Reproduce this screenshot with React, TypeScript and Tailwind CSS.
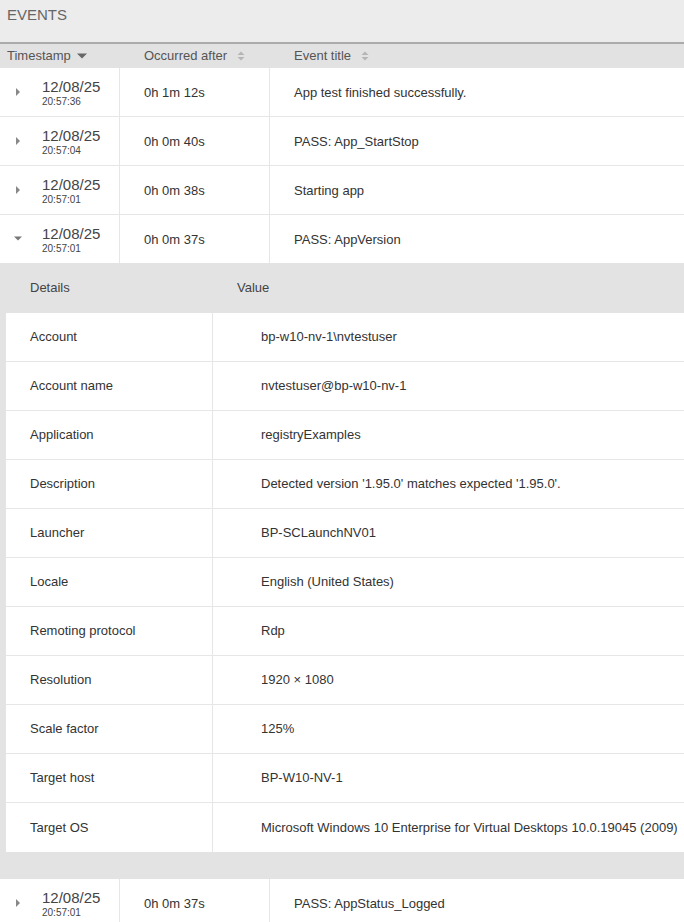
import { useState } from "react";

interface EventRow {
  date: string;
  time: string;
  after: string;
  title: string;
  details?: [string, string][];
}

const events: EventRow[] = [
  { date: "12/08/25", time: "20:57:36", after: "0h 1m 12s", title: "App test finished successfully." },
  { date: "12/08/25", time: "20:57:04", after: "0h 0m 40s", title: "PASS: App_StartStop" },
  { date: "12/08/25", time: "20:57:01", after: "0h 0m 38s", title: "Starting app" },
  {
    date: "12/08/25",
    time: "20:57:01",
    after: "0h 0m 37s",
    title: "PASS: AppVersion",
    details: [
      ["Account", "bp-w10-nv-1\\nvtestuser"],
      ["Account name", "nvtestuser@bp-w10-nv-1"],
      ["Application", "registryExamples"],
      ["Description", "Detected version '1.95.0' matches expected '1.95.0'."],
      ["Launcher", "BP-SCLaunchNV01"],
      ["Locale", "English (United States)"],
      ["Remoting protocol", "Rdp"],
      ["Resolution", "1920 × 1080"],
      ["Scale factor", "125%"],
      ["Target host", "BP-W10-NV-1"],
      ["Target OS", "Microsoft Windows 10 Enterprise for Virtual Desktops 10.0.19045 (2009)"],
    ],
  },
  { date: "12/08/25", time: "20:57:01", after: "0h 0m 37s", title: "PASS: AppStatus_Logged" },
];

const SortBoth = () => (
  <svg width="10" height="12" viewBox="0 0 10 12" className="ml-[9px] text-[#b5b5b5]">
    <path d="M1.5 5 L5 1.5 L8.5 5 Z" fill="currentColor" />
    <path d="M1.5 7 L5 10.5 L8.5 7 Z" fill="currentColor" />
  </svg>
);

const SortDown = () => (
  <svg width="12" height="8" viewBox="0 0 12 8" className="ml-[5px] text-[#666]">
    <path d="M1 1.5 L11 1.5 L6 6.5 Z" fill="currentColor" />
  </svg>
);

const Caret = ({ open }: { open: boolean }) =>
  open ? (
    <svg width="10" height="6" viewBox="0 0 10 6" className="text-[#777]">
      <path d="M1 0.5 L9 0.5 L5 4.5 Z" fill="currentColor" />
    </svg>
  ) : (
    <svg width="6" height="10" viewBox="0 0 6 10" className="text-[#888]">
      <path d="M1 1 L5 5 L1 9 Z" fill="currentColor" />
    </svg>
  );

const App = () => {
  const [openIndex, setOpenIndex] = useState<number | null>(3);

  return (
    <div className="w-[684px] h-[922px] overflow-hidden bg-white text-[13px] text-[#333] font-['Liberation_Sans',Arial,sans-serif]">
      <div className="h-[44px] bg-[#ececec] px-[7px] pt-[4px] text-[15px] text-[#666] border-b-[2px] border-[#ababab]">
        EVENTS
      </div>
      <div className="flex h-[24px] items-center bg-[#e2e2e2] text-[#555]">
        <div className="w-[120px] pl-[7px] flex items-center">
          Timestamp
          <SortDown />
        </div>
        <div className="w-[150px] pl-[24px] flex items-center">
          Occurred after
          <SortBoth />
        </div>
        <div className="flex-1 pl-[24px] flex items-center">
          Event title
          <SortBoth />
        </div>
      </div>

      {events.map((ev, index) => (
        <div key={index}>
          <div
            className="flex h-[49px] border-b border-[#e6e6e6] cursor-pointer"
            onClick={() => setOpenIndex(openIndex === index ? null : index)}
          >
            <div className="w-[120px] shrink-0 flex items-center border-r border-[#e6e6e6]">
              <div className="w-[36px] flex justify-center">
                <Caret open={openIndex === index} />
              </div>
              <div className="flex flex-col leading-none pl-[6px] pt-[1px]">
                <span className="text-[15px] text-[#444]">{ev.date}</span>
                <span className="text-[10px] text-[#444] mt-[3px]">{ev.time}</span>
              </div>
            </div>
            <div className="w-[150px] shrink-0 flex items-center pl-[24px] pt-[1px] border-r border-[#e6e6e6]">
              {ev.after}
            </div>
            <div className="flex-1 flex items-center pl-[24px] pt-[1px] whitespace-nowrap">{ev.title}</div>
          </div>

          {openIndex === index && ev.details && (
            <div className="bg-[#e3e3e3] pl-[6px] pb-[27px] -mt-px">
              <div className="flex h-[50px] items-center text-[#444]">
                <div className="w-[206px] pl-[24px]">Details</div>
                <div className="pl-[25px]">Value</div>
              </div>
              <div className="bg-white">
                {ev.details.map(([k, v], i) => (
                  <div
                    key={k}
                    className={`flex h-[49px] ${i < ev.details!.length - 1 ? "border-b border-[#e6e6e6]" : ""}`}
                  >
                    <div className="w-[207px] shrink-0 flex items-center pl-[24px] border-r border-[#e6e6e6]">
                      {k}
                    </div>
                    <div className="flex-1 flex items-center pl-[48px] whitespace-nowrap">{v}</div>
                  </div>
                ))}
              </div>
            </div>
          )}
        </div>
      ))}
    </div>
  );
};

export default App;
